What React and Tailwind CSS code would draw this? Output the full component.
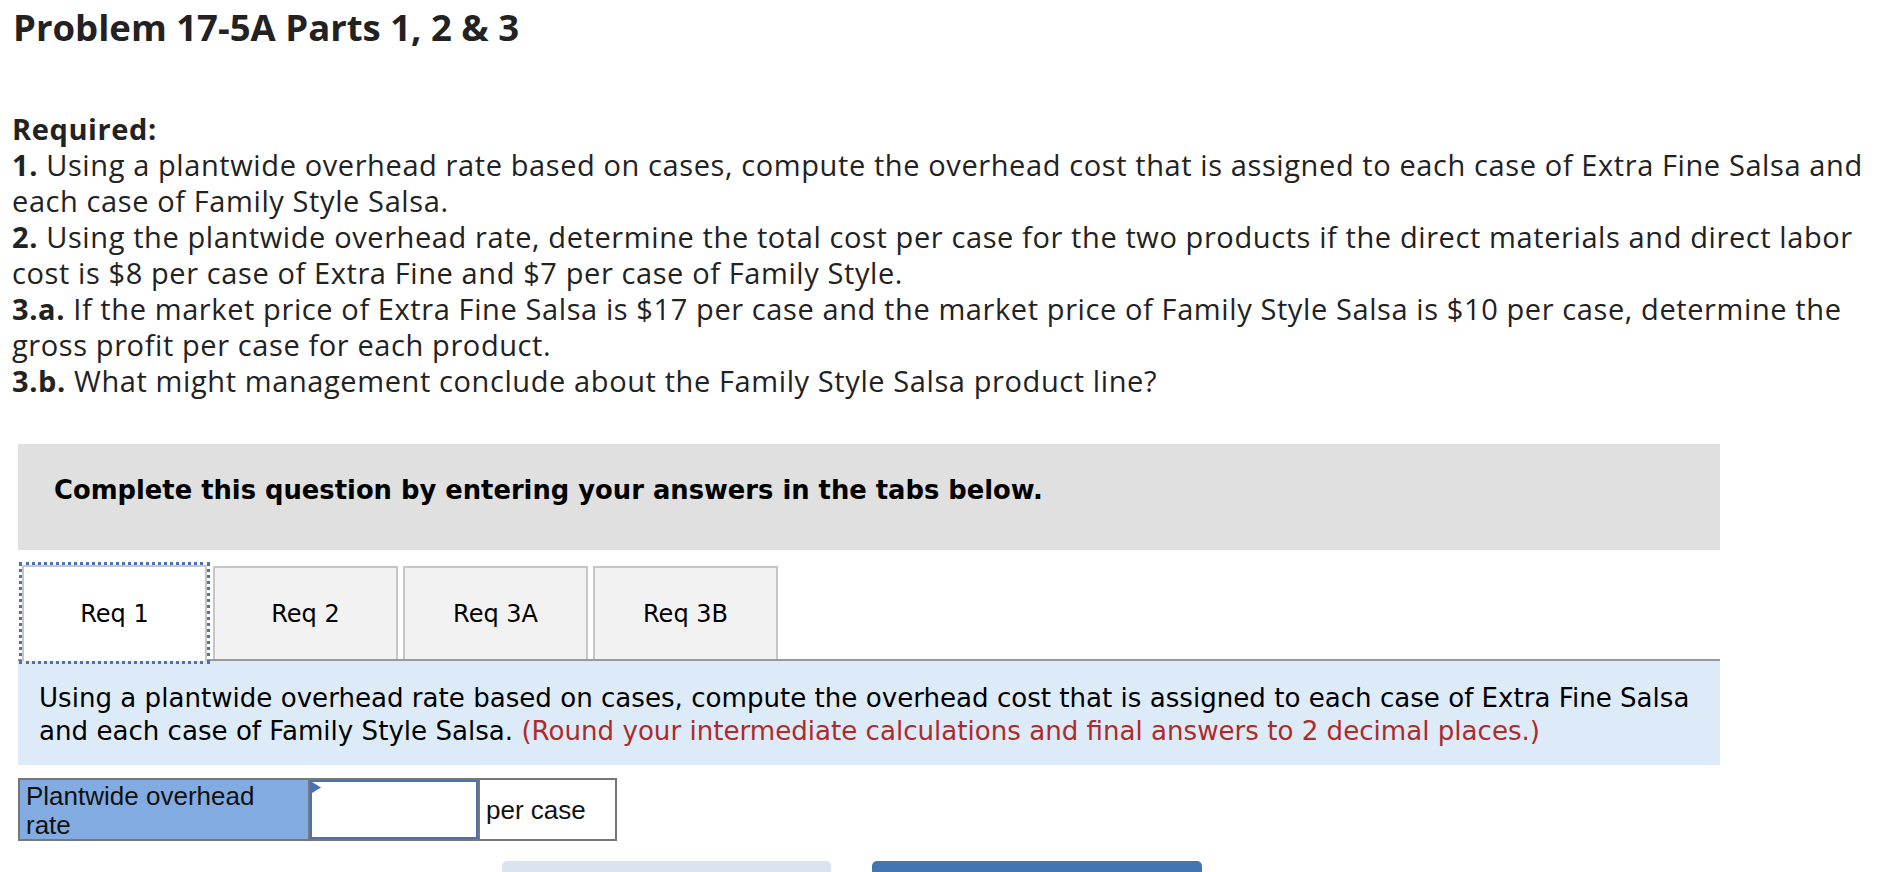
const tabs = ['Req 1', 'Req 2', 'Req 3A', 'Req 3B'];

function Tab({ label, active }) {
  if (active) {
    return (
      <div className="relative z-10 -mb-[2px] ml-[4px] mr-[1px] flex h-[96px] w-[185px] items-center justify-center border-2 border-b-0 border-[#c6c6c6] bg-white outline-[3px] outline-dotted outline-[#4a72b5]">
        {label}
      </div>
    );
  }
  return (
    <div className="flex h-[93px] w-[185px] items-center justify-center border-2 border-b-0 border-[#c6c6c6] bg-[#f2f2f2]">
      {label}
    </div>
  );
}

export default function App() {
  return (
    <div className="min-h-screen overflow-hidden bg-white pb-10">
      <div className="text-[#222] font-['Open_Sans',sans-serif]">
        <h1 className="pl-[13px] pt-[5px] text-[36.5px] font-bold leading-[44px]">Problem 17-5A Parts 1, 2 &amp; 3</h1>

        <div className="mt-[62px] whitespace-nowrap pl-[12px] text-[29px] leading-[36px] tracking-[0.6px]">
          <p className="font-bold">Required:</p>
          <p>
            <b>1.</b> Using a plantwide overhead rate based on cases, compute the overhead cost that is assigned to each case of Extra Fine Salsa and
            <br />
            each case of Family Style Salsa.
          </p>
          <p>
            <b>2.</b> Using the plantwide overhead rate, determine the total cost per case for the two products if the direct materials and direct labor
            <br />
            cost is $8 per case of Extra Fine and $7 per case of Family Style.
          </p>
          <p>
            <b>3.a.</b> If the market price of Extra Fine Salsa is $17 per case and the market price of Family Style Salsa is $10 per case, determine the
            <br />
            gross profit per case for each product.
          </p>
          <p>
            <b>3.b.</b> What might management conclude about the Family Style Salsa product line?
          </p>
        </div>
      </div>

      <div className="ml-[18px] mt-[45px] w-[1702px] font-['DejaVu_Sans','Verdana',sans-serif] text-black">
        <div className="h-[106px] bg-[#e0e0e0] pl-[36px] pt-[32px] text-[25.8px] font-bold leading-[28px]">
          Complete this question by entering your answers in the tabs below.
        </div>

        <div className="flex items-end gap-[5px] border-b-2 border-[#999] pt-[15px] text-[24px]">
          {tabs.map((t, i) => (
            <Tab key={t} label={t} active={i === 0} />
          ))}
        </div>

        <div className="h-[104px] whitespace-nowrap bg-[#ddebf8] pl-[21px] pt-[21px] text-[26.1px] leading-[33px]">
          Using a plantwide overhead rate based on cases, compute the overhead cost that is assigned to each case of Extra Fine Salsa
          <br />
          and each case of Family Style Salsa. <span className="text-[#b02a2a]">(Round your intermediate calculations and final answers to 2 decimal places.)</span>
        </div>

        <div className="mt-[13px] flex h-[63px] w-[599px] border-2 border-[#777] font-['Liberation_Sans','Arial',sans-serif] text-[26px] text-[#111]">
          <div className="w-[290px] border-r-2 border-[#777] bg-[#82abe1] pl-[6px] pt-[2px] leading-[29px]">
            Plantwide overhead
            <br />
            rate
          </div>
          <div className="relative w-[168px] border-2 border-[#4a72b0] bg-white">
            <svg className="absolute left-0 top-0" width="9" height="11" viewBox="0 0 9 11">
              <polygon points="0,0 9,5.5 0,11" fill="#4a72b0" />
            </svg>
          </div>
          <div className="flex flex-1 items-center border-l-2 border-[#777] pl-[6px] leading-[28px]">per case</div>
        </div>

        <div className="mt-[20px] flex">
          <button aria-label="Previous requirement" className="ml-[484px] h-[52px] w-[329px] rounded-t-[5px] bg-[#d9e4f0]" />
          <button aria-label="Next requirement" className="ml-[41px] h-[52px] w-[330px] rounded-t-[5px] bg-[#4475b3]" />
        </div>
      </div>
    </div>
  );
}
